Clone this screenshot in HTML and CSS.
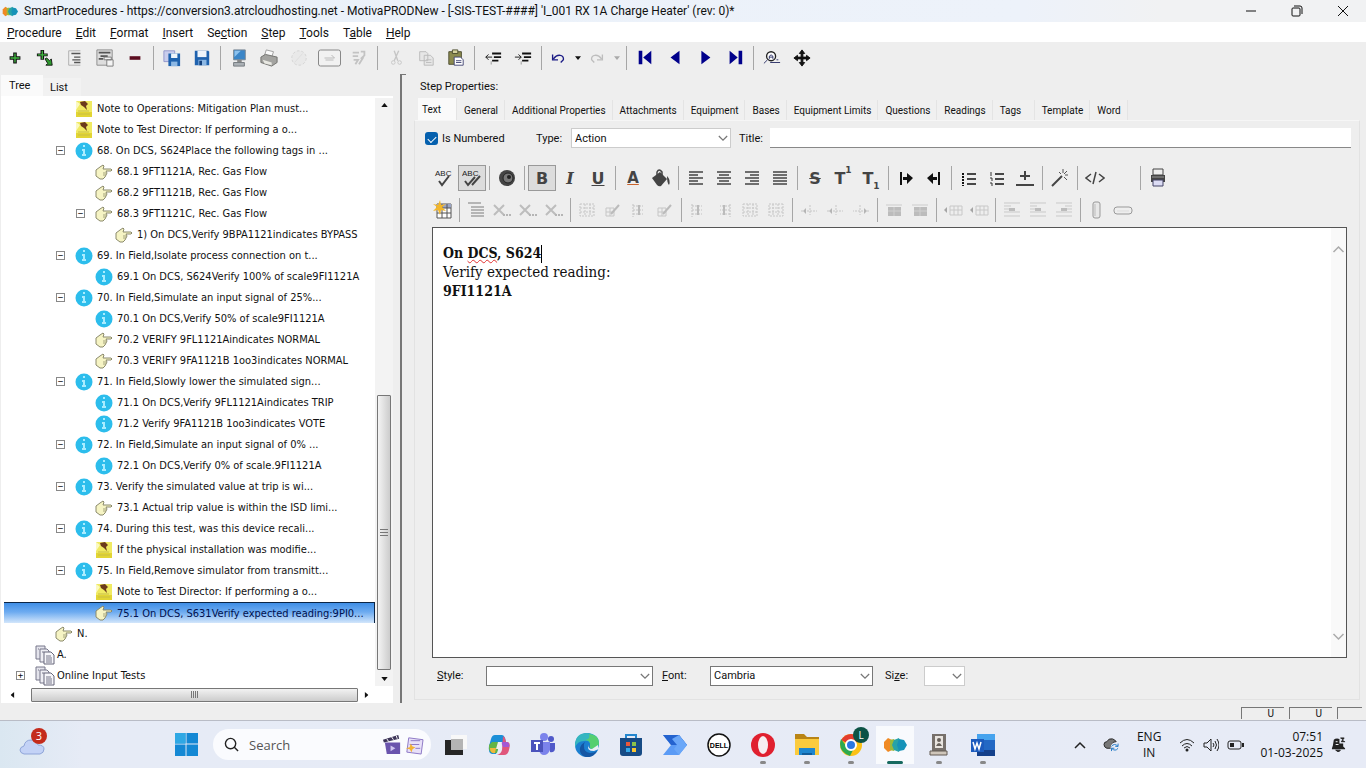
FILE: index.html
```html
<!DOCTYPE html>
<html lang="en">
<head>
<meta charset="UTF-8">
<title>SmartProcedures</title>
<link rel="stylesheet" href="styles.css">
</head>
<body>

<!-- shared icons -->
<svg class="sprite" aria-hidden="true">
  <symbol id="logo" viewBox="0 0 24 16">
    <path d="M1 5l4-4 4 2 3 5-3 5-4 2-4-4z" fill="#f08a24"/>
    <path d="M7 3l4-1 3 6-3 6-4-1z" fill="#9bb83a"/>
    <path d="M11 3l5-2 2 7-2 7-5-2-2-5z" fill="#27a3a8"/>
    <path d="M16 2l5 1 3 5-3 5-5 1-2-6z" fill="#1592b8"/>
  </symbol>
  <symbol id="note" viewBox="0 0 18 18">
    <path d="M1 1h16v16H1z" fill="#f0ea62"/>
    <path d="M1 12h16v5H1z" fill="#e2d534"/>
    <path d="M3 11h11M3 14h12" stroke="#c9be45"/>
    <path d="M5 2l5-1 3 3-2 2 1 4-3-3-3-2z" fill="#6b3a1c"/>
    <path d="M1 1l4 3-4 6z" fill="#fbf9c0"/>
  </symbol>
  <symbol id="info" viewBox="0 0 18 18">
    <circle cx="9" cy="9" r="8.500" fill="#2cbdec"/>
    <path d="M9 3v2M7 8h2v5M7 13h4" stroke="#a9ecff" stroke-width="2" fill="none"/>
  </symbol>
  <symbol id="hand" viewBox="0 0 18 18">
    <path d="M1 7l4-3 3-2 1 1-1 3h8l1 1-1 1h-5l1 2-1 2-1 2-2 2H5l-4-3z" fill="#f6f4c4" stroke="#8b8a6c"/>
    <path d="M8 10h3M8 12h3" stroke="#a5a47f"/>
  </symbol>
  <symbol id="pages" viewBox="0 0 20 20">
    <path d="M1 1h9v13H1z" fill="#e4e4ec" stroke="#77778a"/>
    <path d="M5 4h7l2 2v11H5z" fill="#eeeef4" stroke="#77778a"/>
    <path d="M9 7h7l3 3v9H9z" fill="#f6f6fa" stroke="#66667a"/>
    <path d="M11 11h5M11 13h6M11 15h6M11 17h6M3 4h1M7 7h2" stroke="#77778a"/>
  </symbol>
  <symbol id="page-lines" viewBox="0 0 20 20">
    <path d="M3 2v16M3 18h13M3 2h13" stroke="#aaa" fill="none"/>
    <path d="M6 5h10M9 9h7M7 12h9M9 15h7" stroke="#555" stroke-width="1.500"/>
  </symbol>
  <symbol id="copy" viewBox="0 0 20 20">
    <path d="M3 3h7l2 2v8H3zM8 7h7l3 3v8H8z" fill="#e6e6e6" stroke="#b8b8b8"/>
    <path d="M10 12h6M10 15h6" stroke="#bbb"/>
  </symbol>
  <symbol id="disk" viewBox="0 0 20 20">
    <path d="M2 2h15l1 1v15H2z" fill="#1f62ae"/>
    <path d="M5 2h10v7H5z" fill="#eef4fb"/>
    <path d="M6 12h9v6H6z" fill="#8db8e4"/>
    <path d="M7 13h3v5H7z" fill="#123f7c"/>
  </symbol>
  <symbol id="grid" viewBox="0 0 20 20">
    <path d="M3 4h14v12H3zM3 8h14M3 12h14M8 4v12M13 4v12" fill="none" stroke="#c6c6c6" stroke-dasharray="2 1"/>
  </symbol>
  <symbol id="grid-half" viewBox="0 0 20 20">
    <path d="M4 4v13M4 6h10M4 10h10M4 14h10" fill="none" stroke="#c2c2c2" stroke-dasharray="2 1"/>
    <path d="M10 5v10" stroke="#bbb" stroke-width="2"/>
  </symbol>
  <symbol id="grid-edit" viewBox="0 0 20 20">
    <path d="M3 8h8v8H3zM3 12h8M7 8v8" fill="none" stroke="#c6c6c6"/>
    <path d="M8 14l8-9" stroke="#bbb" stroke-width="2"/>
  </symbol>
  <symbol id="rows" viewBox="0 0 20 20">
    <path d="M2 3h13M5 7h13M5 10h13M5 13h13M5 16h13" stroke="#b5b5b5" stroke-width="2"/>
  </symbol>
  <symbol id="cross" viewBox="0 0 20 20">
    <path d="M2 5l10 10M12 5L2 15" stroke="#bdbdbd" stroke-width="2"/>
    <path d="M11 15h8" stroke="#b5b5b5" stroke-width="2" stroke-dasharray="2 1"/>
  </symbol>
  <symbol id="merge" viewBox="0 0 20 20">
    <path d="M2 11h16M11 5v10" stroke="#c6c6c6" stroke-dasharray="2 1"/>
    <path d="M7 8l-3 3 3 3z" fill="#b5b5b5"/>
  </symbol>
  <symbol id="cell" viewBox="0 0 20 20">
    <path d="M2 5h16" stroke="#ccc"/>
    <path d="M4 7h13v9H4z" fill="#bcbcbc"/>
    <path d="M4 11h13M10 7v9" stroke="#d0d0d0"/>
  </symbol>
  <symbol id="col-move" viewBox="0 0 20 20">
    <path d="M7 6h12v9H7zM7 10h12M11 6v9M15 6v9" fill="none" stroke="#c8c8c8"/>
    <path d="M4 7l-3 3 3 3z" fill="#a5a5a5"/>
  </symbol>
  <symbol id="valign" viewBox="0 0 20 20">
    <path d="M2 3h16M2 6h7M2 9h9M2 12h16M2 16h16" stroke="#c9c9c9"/>
    <path d="M7 8h6v3H7z" fill="#bcbcbc"/>
  </symbol>
  <symbol id="arrow-down" viewBox="0 0 8 5"><path d="M0 0h8L4 5z" fill="currentColor"/></symbol>
  <symbol id="chevron" viewBox="0 0 12 8"><path d="M1 1l5 5 5-5" fill="none" stroke="currentColor" stroke-width="1.500"/></symbol>
</svg>

<header class="titlebar">
  <svg class="app-logo"><use href="#logo"/></svg>
  <h1>SmartProcedures - https://conversion3.atrcloudhosting.net - MotivaPRODNew - [-SIS-TEST-####] 'I_001 RX 1A Charge Heater' (rev: 0)*</h1>
  <button aria-label="Minimize"><svg viewBox="0 0 12 12"><path d="M1 6h10"/></svg></button>
  <button aria-label="Restore"><svg viewBox="0 0 12 12"><rect x="1" y="3" width="8" height="8" rx="1"/><path d="M3 1h6q2 0 2 2v6"/></svg></button>
  <button aria-label="Close"><svg viewBox="0 0 12 12"><path d="M1 1l10 10M11 1L1 11"/></svg></button>
</header>

<nav class="menubar">
  <button><u>P</u>rocedure</button>
  <button><u>E</u>dit</button>
  <button><u>F</u>ormat</button>
  <button><u>I</u>nsert</button>
  <button>Se<u>c</u>tion</button>
  <button><u>S</u>tep</button>
  <button><u>T</u>ools</button>
  <button>T<u>a</u>ble</button>
  <button><u>H</u>elp</button>
</nav>

<div class="toolbar">
  <button aria-label="Add"><svg viewBox="0 0 20 20"><path d="M8 4h4v4h4v4h-4v4H8v-4H4V8h4z" fill="#111"/><path d="M10 5v10M5 10h10" stroke="#3fb53f" stroke-width="1.500"/></svg></button>
  <button aria-label="Add child"><svg viewBox="0 0 20 20"><path d="M5 1h4v4h4v3H9v4H5V8H1V5h4z" fill="#111"/><path d="M7 2v9M2 6.500h10" stroke="#3fb53f" stroke-width="1.500"/><path d="M10 11l2-1 3 3 2-2 1 7h-7l2-2z" fill="#2d9a2d" stroke="#111"/></svg></button>
  <button aria-label="Step"><svg><use href="#page-lines"/></svg></button>
  <button aria-label="Step group"><svg viewBox="0 0 20 20"><path d="M1 1h17v17H1z" fill="#ddd" stroke="#888"/><path d="M3 4h13M5 8h8M3 11h5" stroke="#555" stroke-width="2"/><path d="M9 9h8v3H9zM12 12h7v7h-7z" fill="#f4f4f4" stroke="#777"/></svg></button>
  <button aria-label="Remove"><svg viewBox="0 0 20 20"><path d="M4 8h12v4H4z" fill="#5c0d20"/></svg></button>
  <span class="sep"></span>
  <button aria-label="Save all"><svg viewBox="0 0 20 20"><path d="M1 2h12v12H1z" fill="#c9cdec" stroke="#8d93c8"/><path d="M6 5h13v14H6z" fill="#1f62ae"/><path d="M9 5h7v5H9z" fill="#eef4fb"/><path d="M9 14h7v5H9z" fill="#8db8e4"/></svg></button>
  <button aria-label="Save"><svg><use href="#disk"/></svg></button>
  <span class="sep"></span>
  <button aria-label="Server"><svg viewBox="0 0 20 20"><path d="M4 1h13v11H4z" fill="#3b86c8" stroke="#7a8791"/><path d="M5 2h7l-7 7z" fill="#8cc2ee"/><path d="M8 12h5v3H8z" fill="#888"/><path d="M4 15h12v4H4z" fill="#aab0b5" stroke="#71777c"/></svg></button>
  <button aria-label="Print"><svg viewBox="0 0 20 20"><path d="M7 1l8 2-2 6-8-2z" fill="#fafafa" stroke="#999"/><path d="M1 9l5-3 13 3v6l-6 4-12-4z" fill="#a3a3a0" stroke="#6d6d6a"/><path d="M3 12l10 3v3L5 16z" fill="#e8e8e2"/></svg></button>
  <button aria-label="Attach" disabled><svg viewBox="0 0 20 20"><circle cx="10" cy="10" r="8" fill="#e9e9e9" stroke="#d2d2d2" stroke-dasharray="3 2"/><path d="M5 15L14 5" stroke="#dcdcdc"/></svg></button>
  <button aria-label="Frame" class="wide"><svg viewBox="0 0 24 20"><rect x="1" y="2" width="22" height="16" rx="2" fill="#f1f1f1" stroke="#888"/><path d="M7 10h10l-3-3M8 12h8" fill="none" stroke="#bbb"/></svg></button>
  <button aria-label="Refresh" disabled><svg viewBox="0 0 20 20"><path d="M3 4h7M3 8h6M4 12h5l-3 5M12 3h4v4l-4 4M15 9l-5 8" fill="none" stroke="#c3c3c3" stroke-width="2"/></svg></button>
  <span class="sep"></span>
  <button aria-label="Cut" disabled><svg viewBox="0 0 20 20"><path d="M8 2l4 11M13 2L8 13" stroke="#c5c5c5" stroke-width="1.500"/><circle cx="7" cy="15" r="2" fill="none" stroke="#c5c5c5"/><circle cx="14" cy="15" r="2" fill="none" stroke="#c5c5c5"/></svg></button>
  <button aria-label="Copy" disabled><svg><use href="#copy"/></svg></button>
  <button aria-label="Paste"><svg viewBox="0 0 20 20"><path d="M2 3h14v14H2z" fill="#8b8a4e" stroke="#4a4a2c"/><path d="M6 1h6v4H6z" fill="#d5d3a0" stroke="#4a4a2c"/><path d="M8 9h7l3 3v6H8z" fill="#fff" stroke="#3d4170"/><path d="M10 13h6M10 15h6" stroke="#3d4170"/></svg></button>
  <span class="sep"></span>
  <button aria-label="Outdent"><svg viewBox="0 0 20 20"><path d="M9 5h10M11 9h8M9 13h7" stroke="#111" stroke-width="2"/><path d="M2 9h7M5 6L2 9l3 3" stroke="#111" fill="none"/><path d="M8 14v4" stroke="#555" stroke-dasharray="1 1"/></svg></button>
  <button aria-label="Indent"><svg viewBox="0 0 20 20"><path d="M9 5h10M11 9h8M9 13h7" stroke="#111" stroke-width="2"/><path d="M1 9h7M5 6l3 3-3 3" stroke="#111" fill="none"/><path d="M8 14v4" stroke="#555" stroke-dasharray="1 1"/></svg></button>
  <span class="sep"></span>
  <button aria-label="Undo" class="split"><svg viewBox="0 0 20 20"><path d="M4 6v6h6M5 11c4-6 12-5 11 1l-3 3" fill="none" stroke="#1c1c86" stroke-width="1.500"/></svg></button>
  <button aria-label="Undo list" class="drop"><svg><use href="#arrow-down"/></svg></button>
  <button aria-label="Redo" class="split" disabled><svg viewBox="0 0 20 20"><path d="M16 6v6h-6M15 11c-4-6-12-5-11 1l3 3" fill="none" stroke="#bdbdbd" stroke-width="1.500"/></svg></button>
  <button aria-label="Redo list" class="drop" disabled><svg><use href="#arrow-down"/></svg></button>
  <span class="sep"></span>
  <button aria-label="First"><svg viewBox="0 0 20 20"><path d="M3 2h4v15H3zM17 2v15L8 9.500z" fill="#00008b"/></svg></button>
  <button aria-label="Previous"><svg viewBox="0 0 20 20"><path d="M15 2v15L5 9.500z" fill="#00008b"/></svg></button>
  <button aria-label="Next"><svg viewBox="0 0 20 20"><path d="M6 2v15l10-7.500z" fill="#00008b"/></svg></button>
  <button aria-label="Last"><svg viewBox="0 0 20 20"><path d="M14 2h4v15h-4zM4 2v15l9-7.500z" fill="#00008b"/></svg></button>
  <span class="sep"></span>
  <button aria-label="Find"><svg viewBox="0 0 20 20"><circle cx="9" cy="8" r="5" fill="#fff" stroke="#222" stroke-width="1.500"/><path d="M5 12l-4 4M7 11V8q2-3 4 0v3M7 9h4M8 15h11M15 12h2" fill="none" stroke="#222860"/></svg></button>
  <button aria-label="Move"><svg viewBox="0 0 20 20"><path d="M10 1l3 4h-2v4h4V7l4 3-4 3v-2h-4v4h2l-3 4-3-4h2v-4H5v2l-4-3 4-3v2h4V5H7z" fill="#111" stroke="#111"/></svg></button>
</div>

<main class="workspace">
  <section class="tree-pane">
    <div class="tree-tabs">
      <button class="active">Tree</button>
      <button>List</button>
    </div>
    <div class="tree-box">
      <ul class="tree">
        <li class="l2"><svg><use href="#note"/></svg>Note to Operations: Mitigation Plan must...</li>
        <li class="l2"><svg><use href="#note"/></svg>Note to Test Director: If performing a o...</li>
        <li class="l2 open"><svg><use href="#info"/></svg>68. On DCS, S624Place the following tags in ...</li>
        <li class="l3"><svg><use href="#hand"/></svg>68.1 9FT1121A, Rec. Gas Flow</li>
        <li class="l3"><svg><use href="#hand"/></svg>68.2 9FT1121B, Rec. Gas Flow</li>
        <li class="l3 open"><svg><use href="#hand"/></svg>68.3 9FT1121C, Rec. Gas Flow</li>
        <li class="l4"><svg><use href="#hand"/></svg>1) On DCS,Verify 9BPA1121indicates BYPASS</li>
        <li class="l2 open"><svg><use href="#info"/></svg>69. In Field,Isolate process connection on t...</li>
        <li class="l3"><svg><use href="#info"/></svg>69.1 On DCS, S624Verify 100% of scale9FI1121A</li>
        <li class="l2 open"><svg><use href="#info"/></svg>70. In Field,Simulate an input signal of 25%...</li>
        <li class="l3"><svg><use href="#info"/></svg>70.1 On DCS,Verify 50% of scale9FI1121A</li>
        <li class="l3"><svg><use href="#hand"/></svg>70.2 VERIFY 9FL1121Aindicates NORMAL</li>
        <li class="l3"><svg><use href="#hand"/></svg>70.3 VERIFY 9FA1121B 1oo3indicates NORMAL</li>
        <li class="l2 open"><svg><use href="#info"/></svg>71. In Field,Slowly lower the simulated sign...</li>
        <li class="l3"><svg><use href="#info"/></svg>71.1 On DCS,Verify 9FL1121Aindicates TRIP</li>
        <li class="l3"><svg><use href="#info"/></svg>71.2 Verify 9FA1121B 1oo3indicates VOTE</li>
        <li class="l2 open"><svg><use href="#info"/></svg>72. In Field,Simulate an input signal of 0% ...</li>
        <li class="l3"><svg><use href="#info"/></svg>72.1 On DCS,Verify 0% of scale.9FI1121A</li>
        <li class="l2 open"><svg><use href="#info"/></svg>73. Verify the simulated value at trip is wi...</li>
        <li class="l3"><svg><use href="#hand"/></svg>73.1 Actual trip value is within the ISD limi...</li>
        <li class="l2 open"><svg><use href="#info"/></svg>74. During this test, was this device recali...</li>
        <li class="l3"><svg><use href="#note"/></svg>If the physical installation was modifie...</li>
        <li class="l2 open"><svg><use href="#info"/></svg>75. In Field,Remove simulator from transmitt...</li>
        <li class="l3"><svg><use href="#note"/></svg>Note to Test Director: If performing a o...</li>
        <li class="l3 selected"><svg><use href="#hand"/></svg>75.1 On DCS, S631Verify expected reading:9PI0...</li>
        <li class="l1"><svg><use href="#hand"/></svg>N.</li>
        <li class="l0"><svg><use href="#pages"/></svg>A.</li>
        <li class="l0 closed"><svg><use href="#pages"/></svg>Online Input Tests</li>
      </ul>
      <div class="vscroll">
        <svg class="up"><use href="#arrow-down"/></svg>
        <div class="thumb"></div>
        <svg><use href="#arrow-down"/></svg>
      </div>
      <div class="hscroll">
        <svg class="left"><use href="#arrow-down"/></svg>
        <div class="thumb"></div>
        <svg class="right"><use href="#arrow-down"/></svg>
      </div>
    </div>
  </section>

  <div class="splitter"></div>

  <section class="props">
    <h2>Step Properties:</h2>
    <div class="tabs">
      <button class="active">Text</button>
      <button>General</button>
      <button>Additional Properties</button>
      <button>Attachments</button>
      <button>Equipment</button>
      <button>Bases</button>
      <button>Equipment Limits</button>
      <button>Questions</button>
      <button>Readings</button>
      <button class="short">Tags</button>
      <button>Template</button>
      <button>Word</button>
    </div>

    <div class="page">
      <div class="fields">
        <input type="checkbox" id="numbered" checked>
        <label for="numbered" class="numbered-label">Is Numbered</label>
        <label for="type" class="type-label">Type:</label>
        <span class="combo type"><select id="type"><option>Action</option></select><svg><use href="#chevron"/></svg></span>
        <label for="title" class="title-label">Title:</label>
        <input type="text" id="title">
      </div>

      <div class="edit-bar">
        <button aria-label="Spelling"><svg viewBox="0 0 20 20"><text x="1" y="8" class="abc">ABC</text><path d="M5 13l3 4 7-9" fill="none" stroke="#444" stroke-width="2"/></svg></button>
        <button aria-label="Check as you type" class="on"><svg viewBox="0 0 20 20"><text x="0" y="8" class="abc">ABC</text><path d="M3 13l3 4 7-8M10 17l8-9" fill="none" stroke="#444" stroke-width="2"/></svg></button>
        <span class="sep"></span>
        <button aria-label="Symbol"><svg viewBox="0 0 20 20"><circle cx="10" cy="10" r="8" fill="#444"/><circle cx="11" cy="10" r="5" fill="#777" stroke="#222"/><circle cx="12" cy="9" r="2" fill="#222"/></svg></button>
        <span class="sep"></span>
        <button class="on letter"><b>B</b></button>
        <button class="letter serif"><i>I</i></button>
        <button class="letter"><u>U</u></button>
        <span class="sep"></span>
        <button class="letter color">A</button>
        <button aria-label="Fill"><svg viewBox="0 0 20 20"><path d="M1 10l8-6 7 7-6 7q-2 1-4-1z" fill="#444"/><path d="M6 8V4q2-4 5 0v5" fill="none" stroke="#444" stroke-width="1.500"/><path d="M16 8q4 4 2 9-2-2-2-9z" fill="#444"/></svg></button>
        <span class="sep"></span>
        <button aria-label="Left"><svg viewBox="0 0 20 20"><path d="M3 4h14M3 7h9M3 10h14M3 13h9M3 16h14" class="line"/></svg></button>
        <button aria-label="Center"><svg viewBox="0 0 20 20"><path d="M3 4h14M5 7h10M3 10h14M5 13h10M3 16h14" class="line"/></svg></button>
        <button aria-label="Right"><svg viewBox="0 0 20 20"><path d="M3 4h14M8 7h9M3 10h14M8 13h9M3 16h14" class="line"/></svg></button>
        <button aria-label="Justify"><svg viewBox="0 0 20 20"><path d="M3 4h14M3 7h14M3 10h14M3 13h14M3 16h14" class="line"/></svg></button>
        <span class="sep"></span>
        <button class="letter"><s>S</s></button>
        <button class="letter">T<sup>1</sup></button>
        <button class="letter">T<sub>1</sub></button>
        <span class="sep"></span>
        <button aria-label="Left to right"><svg viewBox="0 0 20 20"><path d="M4 4h2v13H4zM7 9h4V5l6 5-6 6v-4H7z" fill="#111"/></svg></button>
        <button aria-label="Right to left"><svg viewBox="0 0 20 20"><path d="M14 4h2v13h-2zM13 9H9V5l-6 5 6 6v-4h4z" fill="#111"/></svg></button>
        <span class="sep"></span>
        <button aria-label="Bullets"><svg viewBox="0 0 20 20"><path d="M8 6h9M8 11h9M8 16h9" class="line dark"/><path d="M4 5v13" stroke="#111" stroke-width="2" stroke-dasharray="2 1"/></svg></button>
        <button aria-label="Numbering"><svg viewBox="0 0 20 20"><path d="M8 6h9M8 11h9M8 16h9" class="line dark"/><path d="M4 4v4M3 10h2v3M3 15h2v3" stroke="#333" fill="none"/></svg></button>
        <button aria-label="Insert line"><svg viewBox="0 0 20 20"><path d="M10 3v9M5 8h10M1 17h18" stroke="#444" stroke-width="2"/></svg></button>
        <span class="sep"></span>
        <button aria-label="Wand"><svg viewBox="0 0 20 20"><path d="M2 18L12 8" stroke="#444" stroke-width="2"/><path d="M13 1v4M18 7h-3M9 4l2 2M17 3l-3 3M17 12l-3-3" stroke="#555"/></svg></button>
        <span class="sep"></span>
        <button aria-label="Source"><svg viewBox="0 0 20 20"><path d="M6 6l-5 4 5 4M14 6l5 4-5 4M11 4L8 16" fill="none" stroke="#444" stroke-width="1.500"/></svg></button>
        <button aria-label="More"></button>
        <span class="sep"></span>
        <button aria-label="Print text"><svg viewBox="0 0 20 20"><path d="M5 1h10v6H5z" fill="#eee" stroke="#444"/><path d="M3 7h14v7H3z" fill="#444"/><path d="M5 12h10v6H5z" fill="#dcdcf4" stroke="#446"/><path d="M4 9h12" stroke="#999"/></svg></button>
      </div>

      <div class="edit-bar small">
        <button aria-label="Insert table"><svg viewBox="0 0 20 20"><path d="M4 4h14v14H4z" fill="#fff" stroke="#555"/><path d="M4 4h14v4H4z" fill="#9ba5c4"/><path d="M4 8h14M4 13h14M9 4v14M14 4v14" stroke="#555"/><path d="M7 0l1 5 5-1-4 3 4 4-5-1-1 5-2-5-5 1 4-4-4-3 5 1z" fill="#f2b62a"/></svg></button>
        <span class="sep"></span>
        <button disabled aria-label="Table"><svg><use href="#rows"/></svg></button>
        <button disabled aria-label="Delete row"><svg><use href="#cross"/></svg></button>
        <button disabled aria-label="Delete column"><svg><use href="#cross"/></svg></button>
        <button disabled aria-label="Delete table"><svg><use href="#cross"/></svg></button>
        <span class="sep"></span>
        <button disabled aria-label="Table grid"><svg><use href="#grid"/></svg></button>
        <button disabled aria-label="Row format"><svg><use href="#grid-edit"/></svg></button>
        <button disabled aria-label="Column format"><svg><use href="#grid-half"/></svg></button>
        <button disabled aria-label="Cell format"><svg><use href="#grid-edit"/></svg></button>
        <span class="sep"></span>
        <button disabled aria-label="Column left"><svg><use href="#grid-half"/></svg></button>
        <button disabled aria-label="Column right"><svg class="flip"><use href="#grid-half"/></svg></button>
        <button disabled aria-label="Row above"><svg><use href="#grid"/></svg></button>
        <button disabled aria-label="Row below"><svg class="flip"><use href="#grid"/></svg></button>
        <span class="sep"></span>
        <button disabled aria-label="Split"><svg><use href="#merge"/></svg></button>
        <button disabled aria-label="Split left"><svg><use href="#merge"/></svg></button>
        <button disabled aria-label="Split right"><svg class="flip"><use href="#merge"/></svg></button>
        <span class="sep"></span>
        <button disabled aria-label="Merge cells"><svg><use href="#cell"/></svg></button>
        <button disabled aria-label="Split cells"><svg><use href="#cell"/></svg></button>
        <span class="sep"></span>
        <button disabled aria-label="Move left"><svg><use href="#col-move"/></svg></button>
        <button disabled aria-label="Move right"><svg><use href="#col-move"/></svg></button>
        <span class="sep"></span>
        <button disabled aria-label="Top"><svg><use href="#valign"/></svg></button>
        <button disabled aria-label="Middle"><svg><use href="#valign"/></svg></button>
        <button disabled aria-label="Bottom"><svg class="flip"><use href="#valign"/></svg></button>
        <span class="sep"></span>
        <button aria-label="Vertical"><svg viewBox="0 0 20 20"><rect x="6" y="2" width="7" height="16" rx="2" fill="#e8e8e8" stroke="#999"/><path d="M8 4v12" stroke="#bbb"/></svg></button>
        <button aria-label="Horizontal"><svg viewBox="0 0 20 20"><rect x="1" y="7" width="18" height="7" rx="3" fill="#eee" stroke="#999"/><path d="M4 11h12" stroke="#ddd"/></svg></button>
      </div>

      <div class="editor">
        <div class="editor-text" contenteditable="true" spellcheck="false">
          <p><b>On <span class="misspelt">DCS</span>, S624</b><span class="caret"></span></p>
          <p class="body-text">Verify expected reading:</p>
          <p><b>9FI1121A</b></p>
        </div>
        <div class="editor-scroll">
          <svg class="up"><use href="#chevron"/></svg>
          <svg><use href="#chevron"/></svg>
        </div>
      </div>

      <div class="font-row">
        <label for="style" class="style-label"><u>S</u>tyle:</label>
        <span class="combo style"><select id="style"><option></option></select><svg><use href="#chevron"/></svg></span>
        <label for="font" class="font-label"><u>F</u>ont:</label>
        <span class="combo font"><select id="font"><option>Cambria</option></select><svg><use href="#chevron"/></svg></span>
        <label for="size" class="size-label">Si<u>z</u>e:</label>
        <span class="combo size"><select id="size"><option></option></select><svg><use href="#chevron"/></svg></span>
      </div>
    </div>
  </section>
</main>

<footer class="statusbar">
  <span>U</span>
  <span>U</span>
  <span class="last"></span>
</footer>

<div class="taskbar">
  <div class="weather">
    <svg viewBox="0 0 26 18"><path d="M5 17q-4-1-4-4t4-4q1-6 7-6 5 0 7 5 6 0 6 4 0 4-4 5z" fill="#c3d2f6" stroke="#8fa5d8"/></svg>
    <span class="badge">3</span>
  </div>
  <button class="start" aria-label="Start"><svg viewBox="0 0 24 24"><path d="M0 0h11v11H0zM12 0h12v11H12zM0 12h11v12H0zM12 12h12v12H12z" fill="#1488d4"/><path d="M0 0h11v11H0z" fill="#2fa8e4"/></svg></button>
  <div class="search">
    <svg viewBox="0 0 16 16"><circle cx="7" cy="7" r="5.500"/><path d="M11 11l4 4"/></svg>
    <input type="text" placeholder="Search" aria-label="Search">
    <svg class="clap" viewBox="0 0 44 22">
      <path d="M3 9h16v12H5z" fill="#6a54ad"/><path d="M1 6l16-5 1 4L2 9z" fill="#3c3458"/><path d="M5 5l2 3M10 3l2 3M15 2l1 3" stroke="#fff"/><path d="M9 12l5 3-5 3z" fill="#cfc4f0"/>
      <path d="M28 4l15 2-2 15-15-2z" fill="#e8e0f8" stroke="#8a76c4"/><path d="M30 7h10M29 11h10M35 15h5" stroke="#8a76c4"/><path d="M30 10l2 3 3 1-3 2-1 3-2-3-4-1 4-1z" fill="#f2b233"/>
    </svg>
  </div>
  <div class="apps">
    <button aria-label="Task view"><svg viewBox="0 0 24 24"><path d="M8 2h16v14H8z" fill="#f8f8f8"/><path d="M2 7h18v15H2z" fill="#262626"/><path d="M8 6h12v11H8z" fill="#b4b4b4"/></svg></button>
    <button aria-label="Copilot"><svg viewBox="0 0 24 24"><path d="M8 2h7q2 0 3 3l1 4h-5L9 21H5Q1 20 2 13l2-7q1-4 4-4z" fill="#1b8fd8"/><path d="M2 12q-1 8 5 8h3l3-11H5z" fill="#63b447"/><path d="M16 3l2 2 1 4h2q3 1 1 8-1 5-5 5h-7q4-1 5-5z" fill="#e0567b"/><path d="M14 9h6q3 1 2 5h-6z" fill="#a457d4"/><path d="M11 9h4l-2 7H9z" fill="#eee"/><path d="M3 15h6l-1 5q-5 1-5-5z" fill="#f1b73c"/></svg></button>
    <button aria-label="Teams"><svg viewBox="0 0 24 24"><circle cx="13" cy="4" r="4" fill="#7b83eb"/><circle cx="20" cy="6" r="3" fill="#5059c9"/><path d="M8 9h11v8q-2 5-6 5t-5-5z" fill="#7b83eb"/><path d="M19 10h5v6q-1 4-5 3z" fill="#5059c9"/><path d="M0 7h12v12H0z" fill="#4b53bc"/><path d="M3 10h6M6 10v7" stroke="#fff" stroke-width="2"/></svg></button>
    <button aria-label="Edge"><svg viewBox="0 0 24 24"><circle cx="12" cy="12" r="12" fill="#1b7fd0"/><path d="M0 11Q1 0 12 0q12 1 12 10 0 5-6 6-4 0-3-3Q16 7 9 8 2 8 0 15z" fill="#35b6c0"/><path d="M14 1q10 1 10 9 0 5-6 6-4 0-3-3 1-6-5-6 6-1 4-6z" fill="#55cf70"/><path d="M9 11q-1 8 6 9 4 0 7-2-4 7-11 6-7-2-6-9 1-4 5-6z" fill="#1456a4"/><path d="M14 12q-3 6 5 6l5-2-1-4-6 4q-4 0-3-4z" fill="#e9edf6"/></svg></button>
    <button aria-label="Store"><svg viewBox="0 0 24 24"><path d="M7 6V2h10v4" fill="none" stroke="#2487cf" stroke-width="2"/><path d="M1 5h22v15q0 3-3 3H4q-3 0-3-3z" fill="#174b85"/><path d="M7 9h4v4H7z" fill="#e9583a"/><path d="M13 9h4v4h-4z" fill="#8bc34a"/><path d="M7 15h4v4H7z" fill="#35a8e8"/><path d="M13 15h4v4h-4z" fill="#fbc531"/></svg></button>
    <button aria-label="Power Automate"><svg viewBox="0 0 24 24"><path d="M0 2h16l8 10-8 10H0l8-10z" fill="#5b9bf5"/><path d="M0 2h16l8 10H8z" fill="#2463cf"/><path d="M16 2l8 10-8 10-5-6 3-4-5-6z" fill="#6aa7f8"/></svg></button>
    <button aria-label="Dell"><svg viewBox="0 0 24 24"><circle cx="12" cy="12" r="11" fill="#fff" stroke="#111" stroke-width="1.500"/><text x="12" y="15" class="dell">DELL</text></svg></button>
    <button aria-label="Opera" class="running"><svg viewBox="0 0 24 24"><ellipse cx="12" cy="12" rx="12" ry="12" fill="#e0202f"/><ellipse cx="12" cy="12" rx="5" ry="9" fill="#f6edf0"/></svg></button>
    <button aria-label="File Explorer" class="running"><svg viewBox="0 0 24 24"><path d="M0 1h9l3 3h12v8H0z" fill="#b98415"/><path d="M0 6h24v16H0z" fill="#fbcb3d"/><path d="M4 15h16v7H4z" fill="#1e86cf"/><path d="M7 20h10v2H7z" fill="#115d9b"/></svg></button>
    <button aria-label="Chrome" class="running chrome"><svg viewBox="0 0 24 24"><circle cx="12" cy="12" r="11" fill="#fbc116"/><path d="M12 12L2 7Q6 1 12 1t10 6z" fill="#e33b2e"/><path d="M2 6Q-2 18 11 23l4-8-7-1z" fill="#2da94f"/><circle cx="12" cy="12" r="5" fill="#2a78e4" stroke="#fff" stroke-width="2"/></svg><span class="profile">L</span></button>
    <button aria-label="SmartProcedures" class="running current"><svg class="smart"><use href="#logo"/></svg></button>
    <button aria-label="Contacts" class="running"><svg viewBox="0 0 24 24"><path d="M5 1h14v17H5z" fill="#76706b"/><path d="M8 3h8v12H8z" fill="#e8e4df"/><circle cx="12" cy="7" r="2" fill="#66605a"/><path d="M9 13q3-6 6 0z" fill="#66605a"/><path d="M3 18h17v4H3z" fill="#cfc6ba" stroke="#625a52"/></svg></button>
    <button aria-label="Word" class="running"><svg viewBox="0 0 24 24"><path d="M6 1h18v22H6z" fill="#2368c4"/><path d="M6 1h18v6H6z" fill="#46a3ee"/><path d="M6 17h18v6H6z" fill="#15408a"/><path d="M0 6h13v13H0z" fill="#1c5bbd"/><path d="M2 9l2 7 2-6 2 6 2-7" fill="none" stroke="#fff" stroke-width="1.500"/></svg></button>
  </div>
  <div class="tray">
    <svg class="tray-up" viewBox="0 0 12 8"><path d="M1 7l5-5 5 5" fill="none" stroke="#222" stroke-width="1.500"/></svg>
    <svg class="sync" viewBox="0 0 18 16"><path d="M4 12q-3-1-3-4t3-3q2-4 6-3 3 1 4 3-4 0-5 3l-1 4z" fill="#777" stroke="#222"/><circle cx="13" cy="11" r="5" fill="#e7ebf6"/><path d="M9 10q3-4 7 0M16 7v3h-3M16 12q-3 4-7 0M9 15v-3h3" fill="none" stroke="#1e76c4"/></svg>
    <div class="lang">ENG<br>IN</div>
    <svg class="wifi" viewBox="0 0 16 14"><path d="M1 5q7-7 14 0M3 8q5-5 10 0M5 10q3-3 6 0" fill="none" stroke="#222"/><circle cx="8" cy="12" r="1.500" fill="#222"/></svg>
    <svg class="sound" viewBox="0 0 16 14"><path d="M1 5h3l4-4v12L4 9H1zM10 5q2 2 0 4M12 3q3 4 0 8M14 1q4 6 0 12" fill="none" stroke="#222"/></svg>
    <svg class="battery" viewBox="0 0 18 12"><rect x="1" y="2" width="13" height="8" rx="2" fill="none" stroke="#222"/><path d="M3 4h4v4H3z" fill="#222"/><path d="M16 4v4" stroke="#222" stroke-width="2"/></svg>
    <div class="clock">07:51<br>01-03-2025</div>
    <svg class="bell" viewBox="0 0 16 16"><path d="M3 3q2-2 6-1v5h4v3l2 2v1H1v-1l1-3z" fill="#222"/><path d="M5 14h5l-2 2zM10 1h4l-3 4h4" fill="#222" stroke="#222"/><path d="M5 5h2M5 8h3" stroke="#fff"/></svg>
  </div>
</div>

</body>
</html>
```

FILE: styles.css
```css
*, *::before, *::after {
  box-sizing: border-box;
}

body {
  margin: 0;
  min-height: 100vh;
  display: flex;
  flex-direction: column;
  background: #eee;
  color: #111;
  font-family: Roboto, "Liberation Sans", sans-serif;
  font-size: 11px;
}

button {
  font: inherit;
  color: inherit;
  background: none;
  border: none;
  padding: 0;
}

svg {
  display: block;
  flex: none;
}

.sprite {
  display: none;
}

/* title and menu */
.titlebar {
  display: flex;
  align-items: center;
  height: 22px;
  background: linear-gradient(90deg, #eaf1f9, #edf2fa 75%, #f1f2f3 85%);
}

.app-logo {
  width: 16px;
  height: 11px;
  margin: 0 6px 0 2px;
}

.titlebar h1 {
  flex: 1;
  margin: 0;
  font-size: 12px;
  font-weight: normal;
  white-space: nowrap;
}

.titlebar button {
  width: 46px;
  height: 22px;
  display: flex;
  align-items: center;
  justify-content: center;
}

.titlebar button svg {
  width: 12px;
  height: 12px;
  fill: none;
  stroke: #111;
}

.menubar {
  display: flex;
  height: 20px;
  padding-top: 1px;
  background: #fff;
  font-size: 12px;
}

.menubar button {
  padding: 0 7px;
}

/* main toolbar */
.toolbar {
  display: flex;
  align-items: center;
  height: 32px;
}

.toolbar button {
  width: 30px;
  height: 28px;
  display: flex;
  align-items: center;
  justify-content: center;
}

.toolbar svg {
  width: 18px;
  height: 18px;
}

.toolbar .wide svg {
  width: 25px;
  height: 20px;
}

.toolbar .split {
  width: 26px;
}

.toolbar .drop {
  width: 13px;
}

.toolbar .drop svg {
  width: 6px;
  height: 4px;
}

.toolbar .drop:disabled {
  color: #aaa;
}

.sep {
  width: 7px;
  height: 24px;
  display: flex;
  justify-content: center;
}

.sep::before {
  content: "";
  width: 1px;
  background: #a6a6a6;
}

/* left tree */
.workspace {
  flex: 1;
  display: flex;
}

.tree-pane {
  width: 396px;
  flex: none;
  display: flex;
  flex-direction: column;
  padding: 0 3px 0 1px;
}

.tree-tabs {
  display: flex;
  align-items: flex-end;
  height: 22px;
}

.tree-tabs button {
  height: 18px;
  width: 38px;
  padding-left: 7px;
  text-align: left;
  background: #f2f2f2;
}

.tree-tabs .active {
  height: 21px;
  width: 42px;
  padding-left: 8px;
  background: #fafafa;
}

.tree-box {
  flex: 1;
  display: grid;
  grid-template-columns: 1fr 18px;
  grid-template-rows: 1fr 17px;
  padding: 2px 0 0 3px;
  background: #fff;
}

.tree {
  list-style: none;
  margin: 0;
  padding: 0;
  font: 11px "DejaVu Sans Condensed", "DejaVu Sans", sans-serif;
}

.tree li {
  display: flex;
  align-items: center;
  height: 21px;
  white-space: nowrap;
}

.tree svg {
  width: 18px;
  height: 18px;
  margin-right: 4px;
}

.tree li::before {
  content: "";
  width: 9px;
  height: 9px;
  margin-right: 10px;
  font: 9px/7px "DejaVu Sans Mono", monospace;
  text-align: center;
  flex: none;
}

.tree .open::before {
  content: "−";
  border: 1px solid #888;
}

.tree .closed::before {
  content: "+";
  border: 1px solid #888;
}

.tree .l0 { padding-left: 12px; }
.tree .l0 svg { width: 20px; height: 20px; margin-right: 2px; }
.tree .l1 { padding-left: 32px; }
.tree .l2 { padding-left: 52px; }
.tree .l3 { padding-left: 72px; }
.tree .l4 { padding-left: 92px; }

.tree .selected {
  color: #00104e;
  border: solid #0b2545;
  border-width: 1px 1px 0 0;
  background: linear-gradient(#3f8ee6, #6dabf0 45%, #d3e6fb);
}

.vscroll {
  display: flex;
  flex-direction: column;
  align-items: center;
  padding: 5px 2px;
  background: #f3f3f3;
}

.vscroll svg, .hscroll svg {
  width: 7px;
  height: 4px;
  color: #111;
}

.up {
  transform: rotate(180deg);
}

.left {
  transform: rotate(90deg);
}

.right {
  transform: rotate(-90deg);
}

.thumb {
  border: 1px solid #777;
  border-radius: 1px;
}

.vscroll .thumb {
  flex: 1;
  width: 14px;
  margin: 288px 0 7px;
  background:
    repeating-linear-gradient(#777 0 1px, transparent 1px 3px) center / 8px 7px no-repeat,
    linear-gradient(90deg, #f4f4f4, #ccc);
}

.hscroll {
  display: flex;
  align-items: center;
  padding: 0 5px;
}

.hscroll .thumb {
  flex: 1;
  height: 14px;
  margin: 0 5px 0 15px;
  background:
    repeating-linear-gradient(90deg, #777 0 1px, transparent 1px 2px) center / 7px 7px no-repeat,
    linear-gradient(#f2f2f2, #ccc);
}

.splitter {
  width: 6px;
  flex: none;
  margin-left: 4px;
  border: solid #777;
  border-width: 1px 0 0 2px;
}

/* right side */
.props {
  flex: 1;
  min-width: 0;
  display: flex;
  flex-direction: column;
  padding: 6px 6px 3px 8px;
}

.props h2 {
  margin: 0 6px;
  font-size: 11px;
  font-weight: normal;
  line-height: 14px;
}

.tabs {
  display: flex;
  align-items: flex-end;
  height: 26px;
  padding-left: 4px;
  font-size: 10px;
}

.tabs button {
  height: 20px;
  padding: 0 6px 0 7px;
  border-right: 1px solid #e4e4e4;
  background: #f0f0f0;
  white-space: nowrap;
}

.tabs .active {
  width: 39px;
  height: 22px;
  padding: 0 4px;
  text-align: left;
  background: #fafafa;
}

.tabs .short {
  width: 42px;
  text-align: left;
}

.page {
  flex: 1;
  display: flex;
  flex-direction: column;
  padding: 6px 8px 0 10px;
  border: 1px solid #e2e2e2;
  border-top-color: #f6f6f6;
}

.fields {
  display: flex;
  align-items: center;
  height: 22px;
}

.fields input[type="checkbox"] {
  appearance: none;
  width: 13px;
  height: 13px;
  margin: 0 4px 0 0;
  border-radius: 3px;
  background: #0560ae;
  display: flex;
  align-items: center;
  justify-content: center;
}

.fields input[type="checkbox"]::before {
  content: "";
  width: 8px;
  height: 5px;
  border: solid #fff;
  border-width: 0 0 1px 1px;
  transform: rotate(-45deg);
}

.numbered-label {
  width: 94px;
}

.type-label {
  width: 35px;
}

.title-label {
  width: 31px;
  margin-left: 8px;
}

.fields input[type="text"] {
  flex: 1;
  min-width: 0;
  height: 20px;
  border: none;
  border-bottom: 1px solid #888;
  background: #fff;
}

.combo {
  position: relative;
  height: 20px;
}

.combo select {
  appearance: none;
  width: 100%;
  height: 100%;
  padding: 0 3px;
  font: inherit;
  color: inherit;
  background: #fff;
  border: 1px solid #777;
  border-radius: 0;
}

.combo svg {
  position: absolute;
  right: 3px;
  top: 7px;
  width: 10px;
  height: 7px;
  color: #777;
  pointer-events: none;
}

.combo.type { width: 160px; }
.combo.style { width: 167px; }
.combo.font { width: 163px; }
.combo.size { width: 41px; }

.combo.type select, .combo.size select {
  border-color: #ccc;
}

/* text editing bars */
.edit-bar {
  display: flex;
  align-items: center;
  height: 34px;
  margin-top: 12px;
  padding-left: 5px;
}

.edit-bar button {
  width: 28px;
  height: 26px;
  display: flex;
  align-items: center;
  justify-content: center;
}

.edit-bar .on {
  background: #dcdcdc;
  border: 1px solid #999;
}

.edit-bar svg {
  width: 20px;
  height: 20px;
}

.edit-bar.small {
  height: 30px;
  margin-top: 0;
}

.edit-bar.small button {
  width: 26px;
}

.flip {
  transform: scaleX(-1);
}

.abc {
  font: 8px "Liberation Sans", sans-serif;
  fill: #222;
}

.line {
  stroke: #444;
  stroke-width: 1.500;
}

.dark {
  stroke: #111;
}

.edit-bar .letter {
  color: #444;
  font: bold 16px "DejaVu Sans", sans-serif;
}

.edit-bar .serif {
  font-family: "DejaVu Serif", serif;
}

.edit-bar .color {
  font-size: 15px;
  text-decoration: underline;
  text-decoration-color: #c8632d;
}

.letter sup, .letter sub {
  font-size: 9px;
}

.letter sup {
  align-self: flex-start;
}

.letter sub {
  align-self: flex-end;
}

.editor {
  flex: 1;
  display: flex;
  margin: 2px 4px 0 7px;
  border: 1px solid #555;
  background: #fff;
}

.editor-text {
  flex: 1;
  padding: 16px 10px;
  font: 14px/19px "DejaVu Serif Condensed", "DejaVu Serif", serif;
  outline: none;
}

.editor-text p {
  margin: 0;
}

.editor-text .body-text {
  font-size: 15px;
}

.misspelt {
  text-decoration: underline wavy #e03030 1px;
}

.caret {
  display: inline-block;
  height: 18px;
  border-left: 1px solid #000;
  vertical-align: middle;
}

.editor-scroll {
  width: 15px;
  display: flex;
  flex-direction: column;
  justify-content: space-between;
  align-items: center;
  padding: 17px 0 16px;
  background: #f9f9f9;
}

.editor-scroll svg {
  width: 13px;
  height: 8px;
  color: #aaa;
}

.font-row {
  display: flex;
  align-items: center;
  height: 41px;
  padding: 0 0 6px 12px;
}

.style-label { width: 49px; }
.font-label { width: 48px; margin-left: 9px; }
.size-label { width: 39px; margin-left: 12px; }

.statusbar {
  display: flex;
  justify-content: flex-end;
  gap: 5px;
  height: 17px;
  padding: 4px 4px 1px;
}

.statusbar span {
  width: 43px;
  border: solid #777;
  border-width: 1px 0 0 1px;
  padding-right: 10px;
  text-align: right;
  font-size: 10px;
  line-height: 11px;
}

.statusbar .last {
  width: 25px;
}

/* windows taskbar */
.taskbar {
  display: flex;
  align-items: center;
  height: 48px;
  border-top: 1px solid #b9bcc6;
  background: linear-gradient(90deg, #dae7f1, #e6ebf6 6%, #e7ebf6);
  font-family: "Open Sans", sans-serif;
}

.weather {
  position: relative;
  width: 175px;
  padding-left: 19px;
}

.weather svg {
  width: 26px;
  height: 18px;
  margin-top: 2px;
}

.badge {
  position: absolute;
  left: 31px;
  top: -7px;
  width: 16px;
  height: 16px;
  border-radius: 8px;
  background: #c42b1c;
  color: #fff;
  text-align: center;
  line-height: 16px;
}

.start svg {
  width: 23px;
  height: 23px;
}

.search {
  display: flex;
  align-items: center;
  width: 218px;
  height: 31px;
  margin-left: 15px;
  padding: 0 7px 0 11px;
  border-radius: 16px;
  background: #fafbfe;
}

.search svg {
  width: 15px;
  height: 15px;
  fill: none;
  stroke: #222;
  stroke-width: 1.500;
}

.search input {
  flex: 1;
  min-width: 0;
  margin-left: 8px;
  border: none;
  background: none;
  font: 13px "Open Sans", sans-serif;
}

.search input::placeholder {
  color: #555;
}

.search .clap {
  width: 42px;
  height: 21px;
  stroke-width: 1;
  stroke: none;
}

.apps {
  display: flex;
  margin-left: 2px;
}

.apps button {
  position: relative;
  width: 44px;
  height: 38px;
  display: flex;
  align-items: center;
  justify-content: center;
}

.apps svg {
  width: 24px;
  height: 24px;
}

.apps .running::after {
  content: "";
  position: absolute;
  bottom: 0;
  width: 6px;
  height: 3px;
  border-radius: 2px;
  background: #888;
}

.apps .current {
  background: linear-gradient(90deg, transparent 3px, #f8fafd 3px 41px, transparent 41px);
}

.apps .current::after {
  width: 16px;
  background: #16695f;
}

.apps .smart {
  height: 16px;
}

.profile {
  position: absolute;
  top: 1px;
  right: 4px;
  width: 16px;
  height: 16px;
  border-radius: 8px;
  background: #0c5345;
  color: #fff;
  font-size: 10px;
  line-height: 16px;
}

.dell {
  font: bold 7px "Liberation Sans", sans-serif;
  text-anchor: middle;
}

.tray {
  display: flex;
  align-items: center;
  margin-left: auto;
  padding-right: 20px;
  font-size: 12px;
  line-height: 16px;
}

.tray-up {
  width: 12px;
  height: 8px;
  margin-right: 17px;
}

.sync {
  width: 17px;
  height: 15px;
  margin-right: 17px;
}

.lang {
  margin-right: 18px;
  text-align: center;
}

.wifi, .sound {
  width: 16px;
  height: 14px;
  margin-right: 8px;
}

.battery {
  width: 18px;
  height: 12px;
  margin-right: 15px;
}

.clock {
  margin-right: 8px;
  text-align: right;
}

.bell {
  width: 15px;
  height: 15px;
}
```
